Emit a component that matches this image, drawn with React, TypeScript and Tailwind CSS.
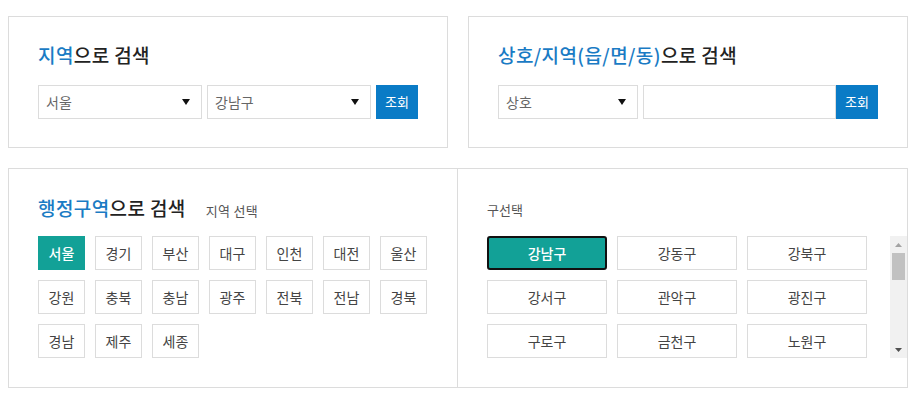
import React from "react";

const sidos = ["서울", "경기", "부산", "대구", "인천", "대전", "울산", "강원", "충북", "충남", "광주", "전북", "전남", "경북", "경남", "제주", "세종"];

const guList = [
    "강남구", "강동구", "강북구", "강서구", "관악구", "광진구", "구로구", "금천구", "노원구",
    "도봉구", "동대문구", "동작구", "마포구", "서대문구", "서초구", "성동구", "성북구", "송파구",
    "양천구", "영등포구", "용산구", "은평구", "종로구", "중구", "중랑구",
];

function FakeSelect({value, width}: {value: string; width: string}) {
    return (
        <div className={`${width} h-[34px] border border-[#dcdcdc] bg-white flex items-center justify-between pl-[7px] pr-[11px]`}>
            <span className="text-[14px] text-[#666]">{value}</span>
            <svg width="8" height="6" viewBox="0 0 8 6">
                <path d="M0 0 L8 0 L4 6 Z" fill="#111"/>
            </svg>
        </div>
    );
}

function SearchButton() {
    return (
        <button className="w-[42px] h-[34px] bg-[#0a7bc6] text-white text-[13px] shrink-0">
            조회
        </button>
    );
}

// drawn scrollbar, the list itself hides the native one
function ScrollBar() {
    return (
        <div className="w-[17px] h-[122px] bg-[#f1f1f1] flex flex-col items-center shrink-0">
            <div className="h-[17px] flex items-center justify-center">
                <svg width="7" height="4" viewBox="0 0 7 4">
                    <path d="M0 4 L7 4 L3.5 0 Z" fill="#a3a3a3"/>
                </svg>
            </div>
            <div className="w-[13px] h-[27px] bg-[#c1c1c1]"/>
            <div className="flex-1"/>
            <div className="h-[17px] flex items-center justify-center">
                <svg width="7" height="4" viewBox="0 0 7 4">
                    <path d="M0 0 L7 0 L3.5 4 Z" fill="#505050"/>
                </svg>
            </div>
        </div>
    );
}

export default function App() {
    return (
        <div className="w-[922px] h-[396px] bg-white pl-[8px] pt-[16px] font-['Noto_Sans_CJK_KR',sans-serif] text-[#222]">
            <div className="flex gap-[20px] w-[900px]">
                <div className="w-[440px] h-[132px] border border-[#dcdcdc] pl-[29px] pt-[24px]">
                    <h2 className="text-[19px] leading-[28px] font-medium tracking-[0.4px]">
                        <span className="text-[#1a7bc4]">지역</span>으로 검색
                    </h2>
                    <div className="flex gap-[5px] mt-[16px]">
                        <FakeSelect value="서울" width="w-[164px]"/>
                        <FakeSelect value="강남구" width="w-[164px]"/>
                        <SearchButton/>
                    </div>
                </div>
                <div className="w-[440px] h-[132px] border border-[#dcdcdc] pl-[29px] pt-[24px]">
                    <h2 className="text-[19px] leading-[28px] font-medium tracking-[0.4px]">
                        <span className="text-[#1a7bc4]">상호/지역(읍/면/동)</span>으로 검색
                    </h2>
                    <div className="flex mt-[16px]">
                        <FakeSelect value="상호" width="w-[140px]"/>
                        <input className="ml-[5px] w-[193px] h-[34px] border border-[#dcdcdc] outline-none px-2 text-[14px]"/>
                        <SearchButton/>
                    </div>
                </div>
            </div>

            <div className="mt-[20px] w-[900px] h-[220px] border border-[#dcdcdc] flex">
                <div className="w-[449px] border-r border-[#dcdcdc] pl-[29px] pt-[25px]">
                    <div className="flex items-baseline h-[28px]">
                        <h2 className="text-[19px] leading-[28px] font-medium tracking-[0.4px]">
                            <span className="text-[#1a7bc4]">행정구역</span>으로 검색
                        </h2>
                        <span className="ml-[20px] text-[13px] tracking-[0.3px] text-[#555]">지역 선택</span>
                    </div>
                    <div className="mt-[14px] grid grid-cols-[repeat(7,47px)] gap-[10px]">
                        {sidos.map((s, i) => (
                            <button
                                key={s}
                                className={
                                    i === 0
                                        ? "h-[34px] bg-[#12a197] text-white text-[14px] font-medium"
                                        : "h-[34px] border border-[#dcdcdc] bg-white text-[14px] text-[#444]"
                                }
                            >
                                {s}
                            </button>
                        ))}
                    </div>
                </div>
                <div className="flex-1 pl-[29px] pt-[32px]">
                    <div className="text-[13px] leading-[18px] text-[#555]">구선택</div>
                    <div className="mt-[17px] flex">
                        <div className="flex-1 h-[122px] overflow-y-auto [scrollbar-width:none]">
                            <div className="grid grid-cols-[repeat(3,120px)] gap-[10px]">
                                {guList.map((g, i) => (
                                    <button
                                        key={g}
                                        className={
                                            i === 0
                                                ? "h-[34px] bg-[#12a197] text-white text-[14px] font-medium border-2 border-[#111] rounded-[3px]"
                                                : "h-[34px] border border-[#dcdcdc] bg-white text-[14px] text-[#444]"
                                        }
                                    >
                                        {g}
                                    </button>
                                ))}
                            </div>
                        </div>
                        <ScrollBar/>
                    </div>
                </div>
            </div>
        </div>
    );
}
